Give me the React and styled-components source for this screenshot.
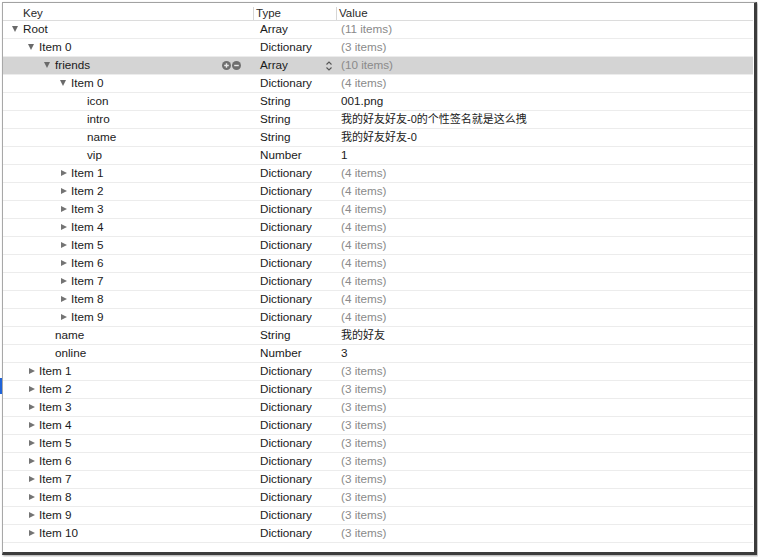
import React from "react";
import styled, { createGlobalStyle } from "styled-components";

const Global = createGlobalStyle`
  html, body { margin: 0; padding: 0; background: #ffffff; }
  body { font-family: "Liberation Sans", "Noto Sans CJK SC", Arial, sans-serif; }
`;

const Page = styled.div`
  position: relative;
  width: 758px;
  height: 557px;
  overflow: hidden;
  background: #ffffff;
`;

const Frame = styled.div`
  margin: 2px 0 0 2px;
  width: 750px;
  height: 549px;
  border-top: 1px solid #a2a2a2;
  border-left: 1px solid #a8a8a8;
  border-right: 3px solid #3c3c3c;
  border-bottom: 3px solid #3c3c3c;
  padding-right: 1px;
  box-shadow: 1px 1px 2px rgba(0, 0, 0, 0.35);
  background: #ffffff;
  display: flex;
  flex-direction: column;
`;

const Header = styled.div`
  display: grid;
  grid-template-columns: 250px 83px 1fr;
  height: 17px;
  border-bottom: 1px solid #dcdcdc;
  font-size: 11.5px;
  color: #2a2a2a;
`;

const HeadCell = styled.div`
  padding-left: ${(p) => p.$pad}px;
  border-left: ${(p) => (p.$divider ? "1px solid #d6d6d6" : "none")};
  margin-top: 4px;
  height: 13px;
  line-height: 13px;
`;

const Row = styled.div`
  display: grid;
  grid-template-columns: 250px 83px 1fr;
  height: 17px;
  border-bottom: 1px solid #ececec;
  background: ${(p) => (p.$selected ? "#d4d4d4" : "#ffffff")};
  font-size: 11.7px;
  line-height: 15px;
  color: #1a1a1a;
`;

const KeyCell = styled.div`
  display: flex;
  align-items: center;
  padding-left: ${(p) => 10 + p.$level * 16}px;
  padding-right: 12px;
  padding-bottom: 2px;
`;

const Disclosure = styled.span`
  width: 10px;
  height: 15px;
  flex: none;
  display: flex;
  align-items: center;
  &::before {
    content: "";
    display: ${(p) => (p.$state === "leaf" ? "none" : "block")};
    width: 0;
    height: 0;
    ${(p) =>
      p.$state === "open"
        ? `border-left: 3.5px solid transparent; border-right: 3.5px solid transparent; border-top: 6px solid #6a6a6a; margin-left: -1px;`
        : `border-top: 3.5px solid transparent; border-bottom: 3.5px solid transparent; border-left: 6px solid #747474; margin-left: 0px;`}
  }
`;

const KeyText = styled.span`
  flex: 1;
  white-space: nowrap;
`;

const RoundButtons = styled.div`
  display: flex;
  gap: 1px;
  align-items: center;
  padding-top: 2px;
`;

const RoundBtn = styled.svg`
  width: 9px;
  height: 9px;
  display: block;
`;

const TypeCell = styled.div`
  display: flex;
  align-items: center;
  padding-left: 7px;
  padding-right: 3px;
  padding-bottom: 2px;
`;

const TypeText = styled.span`
  flex: 1;
  white-space: nowrap;
`;

const Stepper = styled.svg`
  width: 8px;
  height: 12px;
  display: block;
  margin-top: 2px;
`;

const ValueCell = styled.div`
  padding-left: 5px;
  white-space: nowrap;
  display: flex;
  align-items: center;
  padding-bottom: ${(p) => (p.$cjk ? "1px" : "2px")};
  color: ${(p) => (p.$muted ? "#8a8a8a" : "#1a1a1a")};
  font-size: ${(p) => (p.$cjk ? "11px" : "11.7px")};
`;

const BlueMark = styled.div`
  position: absolute;
  left: 0;
  top: 378px;
  width: 2px;
  height: 16px;
  background: #1f63d8;
`;

const rows = [
  { level: 0, key: "Root", type: "Array", value: "(11 items)", muted: true, state: "open" },
  { level: 1, key: "Item 0", type: "Dictionary", value: "(3 items)", muted: true, state: "open" },
  { level: 2, key: "friends", type: "Array", value: "(10 items)", muted: true, state: "open", selected: true },
  { level: 3, key: "Item 0", type: "Dictionary", value: "(4 items)", muted: true, state: "open" },
  { level: 4, key: "icon", type: "String", value: "001.png", state: "leaf" },
  { level: 4, key: "intro", type: "String", value: "我的好友好友-0的个性签名就是这么拽", state: "leaf", cjk: true },
  { level: 4, key: "name", type: "String", value: "我的好友好友-0", state: "leaf", cjk: true },
  { level: 4, key: "vip", type: "Number", value: "1", state: "leaf" },
  ...Array.from({ length: 9 }, (_, i) => ({
    level: 3,
    key: `Item ${i + 1}`,
    type: "Dictionary",
    value: "(4 items)",
    muted: true,
    state: "closed",
  })),
  { level: 2, key: "name", type: "String", value: "我的好友", state: "leaf", cjk: true },
  { level: 2, key: "online", type: "Number", value: "3", state: "leaf" },
  ...Array.from({ length: 10 }, (_, i) => ({
    level: 1,
    key: `Item ${i + 1}`,
    type: "Dictionary",
    value: "(3 items)",
    muted: true,
    state: "closed",
  })),
];

function PlusMinus() {
  return (
    <RoundButtons>
      <RoundBtn viewBox="0 0 9 9">
        <circle cx="4.5" cy="4.5" r="4.5" fill="#6f6f6f" />
        <path d="M2.2 4.5h4.6M4.5 2.2v4.6" stroke="#e8e8e8" strokeWidth="1.4" />
      </RoundBtn>
      <RoundBtn viewBox="0 0 9 9">
        <circle cx="4.5" cy="4.5" r="4.5" fill="#6f6f6f" />
        <path d="M2.2 4.5h4.6" stroke="#e8e8e8" strokeWidth="1.4" />
      </RoundBtn>
    </RoundButtons>
  );
}

function UpDown() {
  return (
    <Stepper viewBox="0 0 8 12">
      <path d="M1.5 4.5L4 2l2.5 2.5M1.5 7.5L4 10l2.5-2.5" fill="none" stroke="#555" strokeWidth="1.1" />
    </Stepper>
  );
}

export default function App() {
  return (
    <Page>
      <Global />
      <Frame>
        <Header>
          <HeadCell $pad={20}>Key</HeadCell>
          <HeadCell $pad={2} $divider>Type</HeadCell>
          <HeadCell $pad={2} $divider>Value</HeadCell>
        </Header>
        {rows.map((r, i) => (
          <Row key={i} $selected={r.selected}>
            <KeyCell $level={r.level}>
              <Disclosure $state={r.state} />
              <KeyText>{r.key}</KeyText>
              {r.selected && <PlusMinus />}
            </KeyCell>
            <TypeCell>
              <TypeText>{r.type}</TypeText>
              {r.selected && <UpDown />}
            </TypeCell>
            <ValueCell $muted={r.muted} $cjk={r.cjk}>
              {r.value}
            </ValueCell>
          </Row>
        ))}
      </Frame>
      <BlueMark />
    </Page>
  );
}
